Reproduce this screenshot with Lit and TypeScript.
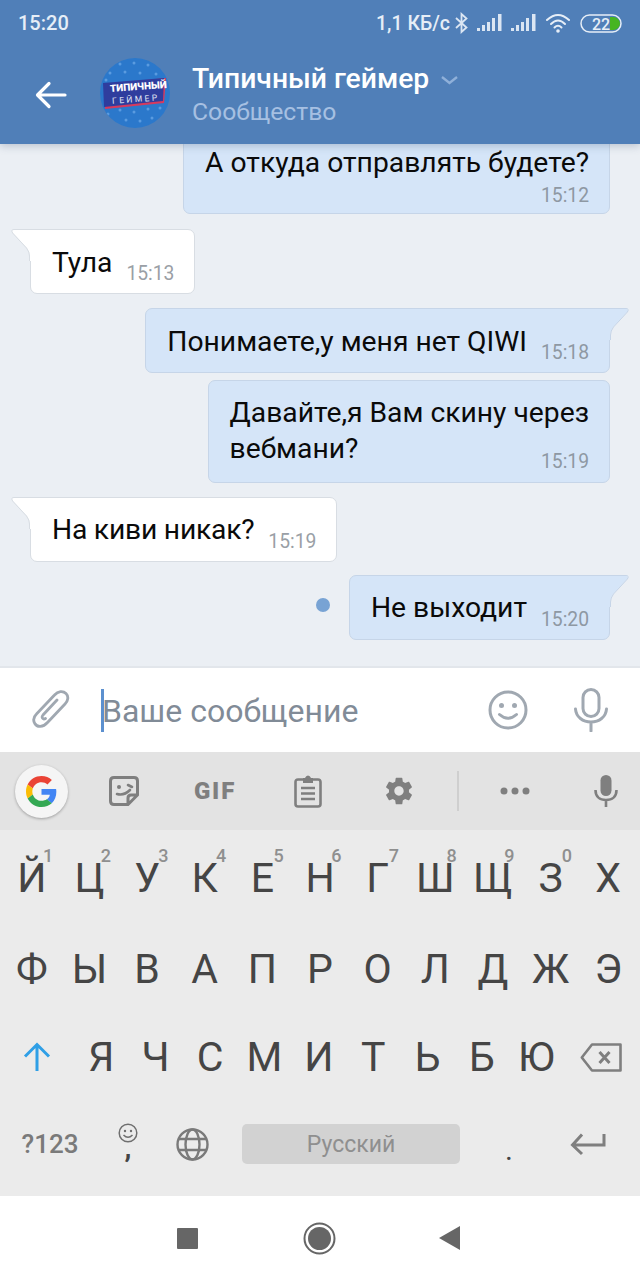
import { LitElement, html, css, svg } from "lit";
import { customElement } from "lit/decorators.js";

const tail = (side: string, fill: string, stroke: string) => html`<svg class="tail ${side}" width="21" height="32" viewBox="0 0 21 32">
  <path d="M21 1 H3 Q0 1 2 4 L16 19 Q19 23 19 27 V32 H21 Z" fill="${fill}" />
  <path d="M21 .5 H3 Q-.5 .5 1.600 4 L15.500 19 Q18.500 23 18.500 27 V32" fill="none" stroke="${stroke}" />
</svg>`;

const signal = html`<svg width="26" height="18" viewBox="0 0 26 18"><g fill="#dbe6f3"><rect x="0" y="14" width="3" height="3"/><rect x="5" y="11" width="3" height="6"/><rect x="10" y="8" width="3" height="9"/><rect x="15" y="4" width="3" height="13"/><rect x="21" y="0" width="3.500" height="17"/></g></svg>`;

const row1 = [["Й","1"],["Ц","2"],["У","3"],["К","4"],["Е","5"],["Н","6"],["Г","7"],["Ш","8"],["Щ","9"],["З","0"],["Х",""]];
const row2 = ["Ф","Ы","В","А","П","Р","О","Л","Д","Ж","Э"];
const row3 = ["Я","Ч","С","М","И","Т","Ь","Б","Ю"];

@customElement("app-root")
export class AppRoot extends LitElement {
  static styles = css`
    :host { display: block; width: 640px; height: 1280px; font-family: Roboto, "Noto Sans", sans-serif; }
    .page { width: 640px; height: 1280px; display: flex; flex-direction: column; overflow: hidden; background: #fff; }
    .header { height: 144px; flex: none; background: #507fb8; position: relative; z-index: 2; box-shadow: 0 2px 8px rgba(60,80,110,.28); display: flex; flex-direction: column; }
    .status { height: 46px; display: flex; align-items: center; padding: 0 0 0 18px; color: #e6eef7; font-weight: 500; font-size: 20px; }
    .status .time { flex: 1; }
    .status .speed { font-size: 19.500px; margin-right: 4px; }
    .status .icons { display: flex; align-items: center; margin-right: 18px; }
    .appbar { height: 98px; display: flex; align-items: flex-start; }
    .back { width: 100px; height: 98px; display: flex; align-items: center; padding-left: 35px; box-sizing: border-box; flex: none; }
    .avatar { width: 70px; height: 70px; border-radius: 50%; background-color: #2b78cb; position: relative; overflow: hidden; margin-top: 12px; flex: none; }
    .avatar svg { position: absolute; left: 0; top: 0; }
    .avatar .t1, .avatar .t2 { position: absolute; color: #fff; white-space: nowrap; transform: rotate(-4deg); }
    .avatar .t1 { left: 10px; top: 24px; font-size: 10px; font-weight: 900; line-height: 10px; }
    .avatar .t2 { left: 12px; top: 36px; font-size: 8.500px; letter-spacing: 2.400px; line-height: 10px; color: #e3e8f6; }
    .titles { margin-left: 22px; padding-top: 15px; }
    .title { font-size: 28.300px; font-weight: 500; color: #fff; line-height: 36px; display: flex; align-items: center; }
    .title svg { margin-left: 11px; margin-top: 2px; }
    .sub { font-size: 24.700px; color: #a6c0e2; line-height: 29px; margin-top: 0; }

    .messages { height: 522px; flex: none; background: #ebeff4; overflow: hidden; display: flex; flex-direction: column; align-items: flex-start; padding-left: 30px; padding-right: 30px; box-sizing: border-box; width: 640px; }
    .bubble { position: relative; box-sizing: border-box; display: flex; border: 1px solid #d8dde3; background: #fff; border-radius: 7px; color: #0a0a0a; font-size: 28.250px; line-height: 37px; padding: 14px 20px 9px 21px; flex: none; }
    .bubble.out { background: #d5e5f8; border-color: #c6d5e8; align-self: flex-end; }
    .bubble.tl { border-top-left-radius: 0; }
    .bubble.tr { border-top-right-radius: 0; }
    .bubble.stack { flex-direction: column; }
    .msg { white-space: nowrap; }
    .stamp { font-size: 19.300px; color: #9a9fa6; line-height: 22px; margin-left: 14px; align-self: flex-end; margin-bottom: -1px; white-space: nowrap; }
    .bubble.out .stamp { color: #8e98a3; }
    .stack .stamp { margin-left: 0; }
    .b1 { margin-top: -15px; height: 85px; padding-top: 14px; }
    .b1 .stamp { margin-top: 4px; }
    .b2 { margin-top: 15px; height: 65px; }
    .b3 { margin-top: 14px; height: 65px; }
    .b4 { margin-top: 7px; height: 103px; line-height: 36px; }
    .b4 .stamp { margin-top: -16px; }
    .b5 { margin-top: 14px; height: 65px; padding-top: 13px; }
    .b5 .msg { letter-spacing: -.22px; }
    .b6 { margin-top: 13px; height: 65px; padding-top: 13px; }
    .tail { position: absolute; top: -1px; }
    .tail.left { left: -20px; }
    .tail.right { right: -20px; transform: scaleX(-1); }
    .dot { position: absolute; left: -34px; top: 22px; width: 14px; height: 14px; border-radius: 50%; background: #78a3d4; }

    .inputbar { height: 86px; flex: none; box-sizing: border-box; background: #fff; border-top: 2px solid #e2e6eb; display: flex; align-items: center; position: relative; }
    .clip { width: 100px; height: 84px; display: flex; align-items: center; padding-left: 32px; box-sizing: border-box; flex: none; margin-right: 1px; }
    .caret { width: 3px; height: 43px; background: #5c90cf; margin-right: -2px; flex: none; z-index: 1; }
    .placeholder { flex: 1; font-size: 32px; color: #818b97; margin-top: 1px; }
    .smile { margin-right: 46px; display: flex; }
    .mic { margin-right: 32px; display: flex; }

    .toolbar { height: 78px; flex: none; background: #e3e3e3; display: flex; align-items: center; }
    .slot { width: 92px; height: 78px; display: flex; align-items: center; justify-content: center; flex: none; }
    .gslot { width: 78px; height: 78px; display: flex; align-items: center; justify-content: center; box-sizing: border-box; flex: none; padding-top: 1px; }
    .gcircle { width: 53px; height: 53px; border-radius: 50%; background: #f5f5f5; box-shadow: 0 1px 3px rgba(0,0,0,.3); display: flex; align-items: center; justify-content: center; margin-left: 4px; }
    .gif { font-size: 24px; font-weight: 900; color: #7f7f7f; letter-spacing: 1.800px; padding-right: 2px; box-sizing: border-box; }
    .gearslot { padding-right: 2px; box-sizing: border-box; }
    .dotsslot { width: 90px; }
    .divider { width: 2px; height: 40px; background: #cfcfcf; margin-left: 11px; margin-right: 11px; flex: none; }
    .micslot { width: 80px; height: 78px; display: flex; align-items: center; justify-content: center; padding-left: 11px; box-sizing: border-box; flex: none; }

    .keyboard { height: 366px; flex: none; background: #ebebeb; display: flex; flex-direction: column; }
    .row { display: flex; flex: none; height: 89px; align-items: center; }
    .key { flex: 1 1 0; height: 89px; display: flex; align-items: center; justify-content: center; font-size: 41px; color: #454545; position: relative; }
    .key sup { position: absolute; top: 16px; left: 40px; font-size: 18px; font-weight: 500; color: #8f8f8f; line-height: 20px; vertical-align: baseline; }
    .row.r1 { height: 95px; padding: 0 3px; }
    .row.r2 { height: 88px; padding: 0 3px; }
    .row.r3 { height: 88px; }
    .row.r4 { height: 95px; align-items: flex-start; margin-top: -1px; }
    .r1 .key { height: 95px; }
    .r2 .key { height: 88px; }
    .r3 .key.wide, .r3 .key.del { flex: 0 0 74px; }
    .r3 .key { flex: 0 0 54.400px; height: 88px; }
    .r4 .fn { height: 88px; display: flex; align-items: center; justify-content: center; flex: none; }
    .n123 { width: 100px; font-size: 26px; font-weight: 500; color: #7a7a7a; }
    .comma { width: 56px; flex-direction: column; color: #454545; font-size: 28px; font-weight: 700; line-height: 20px; padding-bottom: 8px; box-sizing: border-box; }
    .comma span { display: block; margin-top: -5px; }
    .globe { width: 72px; }
    .space { width: 218px; height: 40px; border-radius: 5px; background: #d2d2d2; flex: none; margin-top: 24px; margin-left: 14px; display: flex; align-items: center; justify-content: center; font-size: 23px; color: #8f8f8f; }
    .period { width: 98px; font-size: 30px; color: #454545; }
    .period span { display: block; margin-top: 10px; }
    .enter { width: 59px; }

    .nav { flex: 1; background: #fff; display: flex; align-items: center; }
    .nav .a { width: 198px; display: flex; justify-content: flex-end; margin-right: 105px; }
    .nav .b { width: 33px; display: flex; margin-right: 103px; }
  `;

  render() {
    return html`<div class="page">
      <header class="header">
        <div class="status">
          <span class="time">15:20</span>
          <span class="speed">1,1 КБ/с</span>
          <span class="icons">
            <svg width="15" height="22" viewBox="0 0 15 22" style="margin-right:8px"><path d="M2 6 L12.500 15.500 L7.500 20 V2 L12.500 6.500 L2 16" fill="none" stroke="#dbe6f3" stroke-width="1.800"/></svg>
            ${signal}
            <span style="width:8px"></span>
            ${signal}
            <svg width="26" height="20" viewBox="0 0 26 20" style="margin-left:8px;margin-right:9px"><g fill="none" stroke="#e6eef7" stroke-width="2" stroke-linecap="round"><path d="M2 7 Q13 -3 24 7"/><path d="M6 11 Q13 4 20 11"/><path d="M9.500 14.500 Q13 11 16.500 14.500"/></g><circle cx="13" cy="18" r="1.800" fill="#e6eef7"/></svg>
            <svg width="42" height="19" viewBox="0 0 42 19"><rect x="1" y="1" width="40" height="17" rx="8.500" fill="none" stroke="#e6eef7" stroke-width="1.500"/><path d="M30 3 h3.500 a6.500 6.500 0 0 1 0 13 H30 Z" fill="#46b521"/><text x="12" y="15.500" font-size="16" font-weight="500" fill="#e6eef7" font-family="Roboto">22</text></svg>
          </span>
        </div>
        <div class="appbar">
          <div class="back"><svg width="32" height="28" viewBox="0 0 32 28"><path d="M30 14 H3 M14 2.500 L2.500 14 L14 25.500" fill="none" stroke="#fff" stroke-width="3.200" stroke-linecap="round" stroke-linejoin="round"/></svg></div>
          <div class="avatar">
            <svg width="70" height="70" viewBox="0 0 70 70">
              ${[[20,6],[34,5],[48,7],[10,15],[25,14],[40,15],[56,16],[6,22],[62,24],[8,56],[20,52],[34,54],[48,51],[60,50],[26,62],[40,63],[52,60]].map(([x,y]) => svg`<circle cx="${x}" cy="${y}" r="1.500" fill="#5a9be0"/>`)}
              <path d="M5 26 L66 20 L64 45 L5 51 Z" fill="#d63a5e"/>
              <path d="M3 25 L64 20 L63 43 L4 49 Z" fill="#2f3d9e"/>
            </svg>
            <span class="t1">ТИПИЧНЫЙ</span>
            <span class="t2">ГЕЙМЕР</span>
          </div>
          <div class="titles">
            <div class="title">Типичный геймер<svg width="19" height="10" viewBox="0 0 19 10"><path d="M2 2 L9.500 8 L17 2" fill="none" stroke="#8fb0d9" stroke-width="2.400"/></svg></div>
            <div class="sub">Сообщество</div>
          </div>
        </div>
      </header>

      <section class="messages">
        <div class="bubble out stack b1"><span class="msg">А откуда отправлять будете?</span><span class="stamp">15:12</span></div>
        <div class="bubble tl b2">${tail("left", "#fff", "#d8dde3")}<span class="msg">Тула</span><span class="stamp">15:13</span></div>
        <div class="bubble out tr b3">${tail("right", "#d5e5f8", "#c6d5e8")}<span class="msg">Понимаете,у меня нет QIWI</span><span class="stamp">15:18</span></div>
        <div class="bubble out stack b4"><span class="msg">Давайте,я Вам скину через<br />вебмани?</span><span class="stamp">15:19</span></div>
        <div class="bubble tl b5">${tail("left", "#fff", "#d8dde3")}<span class="msg">На киви никак?</span><span class="stamp">15:19</span></div>
        <div class="bubble out tr b6">${tail("right", "#d5e5f8", "#c6d5e8")}<span class="dot"></span><span class="msg">Не выходит</span><span class="stamp">15:20</span></div>
      </section>

      <section class="inputbar">
        <div class="clip"><svg width="38" height="42" viewBox="0 0 38 42"><path d="M33 15 L15.500 33.500 C11 38.500 5 38.500 2.800 34.500 C1 31.500 1.500 28 4.500 25 L22.500 6 C26 2 31 1.500 34 4.500 C37 7.500 36 12 33 15 M25 11 L11 26 C9 28.500 11 31 13.500 29.500" fill="none" stroke="#a0a8b1" stroke-width="2.800" stroke-linecap="round"/></svg></div>
        <div class="caret"></div>
        <div class="placeholder">Ваше сообщение</div>
        <div class="smile"><svg width="40" height="40" viewBox="0 0 40 40"><circle cx="20" cy="20" r="18" fill="none" stroke="#a0a8b1" stroke-width="3"/><circle cx="13.500" cy="15.500" r="2.500" fill="#a0a8b1"/><circle cx="26.500" cy="15.500" r="2.500" fill="#a0a8b1"/><path d="M11.500 24.500 Q20 32 28.500 24.500" fill="none" stroke="#a0a8b1" stroke-width="3" stroke-linecap="round"/></svg></div>
        <div class="mic"><svg width="34" height="44" viewBox="0 0 34 44"><rect x="9" y="1.500" width="16" height="27" rx="8" fill="none" stroke="#a0a8b1" stroke-width="3"/><path d="M1.500 21 C2 29 9 34 17 34 C25 34 32 29 32.500 21 M17 34 V43" fill="none" stroke="#a0a8b1" stroke-width="3" stroke-linecap="round"/></svg></div>
      </section>

      <section class="toolbar">
        <div class="gslot"><div class="gcircle"><svg width="31" height="31" viewBox="0 0 48 48">
          <path fill="#EA4335" d="M24 9.500c3.540 0 6.710 1.220 9.210 3.600l6.850-6.850C35.900 2.380 30.470 0 24 0 14.620 0 6.510 5.380 2.560 13.220l7.980 6.190C12.430 13.720 17.740 9.500 24 9.500z"/>
          <path fill="#4285F4" d="M46.980 24.550c0-1.570-.15-3.090-.38-4.550H24v9.020h12.940c-.58 2.960-2.260 5.480-4.780 7.180l7.730 6c4.510-4.180 7.090-10.360 7.090-17.650z"/>
          <path fill="#FBBC05" d="M10.530 28.590c-.48-1.450-.76-2.990-.76-4.590s.27-3.140.76-4.590l-7.980-6.190C.92 16.460 0 20.120 0 24c0 3.880.92 7.540 2.560 10.780l7.970-6.190z"/>
          <path fill="#34A853" d="M24 48c6.480 0 11.930-2.130 15.890-5.810l-7.730-6c-2.150 1.450-4.920 2.300-8.160 2.300-6.260 0-11.570-4.220-13.470-9.910l-7.980 6.190C6.510 42.620 14.620 48 24 48z"/>
        </svg></div></div>
        <div class="slot"><svg width="30" height="30" viewBox="0 0 30 30"><path d="M5 1.500 H25 Q28.500 1.500 28.500 5 V19 L19 28.500 H5 Q1.500 28.500 1.500 25 V5 Q1.500 1.500 5 1.500 Z M28 19 H22 Q19 19 19 22 V28" fill="none" stroke="#7f7f7f" stroke-width="3"/><circle cx="10" cy="11" r="2" fill="#7f7f7f"/><path d="M19 9 l4 2 M8 18 Q15 20 21 14" fill="none" stroke="#7f7f7f" stroke-width="2.600" stroke-linecap="round"/></svg></div>
        <div class="slot gif">GIF</div>
        <div class="slot"><svg width="28" height="33" viewBox="0 0 28 33"><path d="M9 4.500 H4 Q1.500 4.500 1.500 7 V29 Q1.500 31.500 4 31.500 H24 Q26.500 31.500 26.500 29 V7 Q26.500 4.500 24 4.500 H19" fill="none" stroke="#7f7f7f" stroke-width="2.600"/><path d="M9 3 H11 Q12 .5 14 .5 Q16 .5 17 3 H19 V8 H9 Z" fill="#7f7f7f"/><path d="M7 13 H21 M7 18.500 H21 M7 24 H21" stroke="#7f7f7f" stroke-width="2.600"/></svg></div>
        <div class="slot gearslot"><svg width="32" height="32" viewBox="0 0 24 24"><path fill="#7f7f7f" d="M19.430 12.980c.04-.32.07-.64.07-.98s-.03-.66-.07-.98l2.110-1.650c.19-.15.24-.42.12-.64l-2-3.460c-.12-.22-.39-.3-.61-.22l-2.490 1c-.52-.4-1.080-.73-1.690-.98l-.38-2.650C14.460 2.180 14.250 2 14 2h-4c-.25 0-.46.18-.49.420l-.38 2.650c-.61.25-1.170.59-1.690.98l-2.490-1c-.23-.09-.49 0-.61.220l-2 3.460c-.13.22-.07.49.12.64l2.110 1.650c-.04.32-.07.65-.07.98s.03.66.07.98l-2.110 1.650c-.19.15-.24.42-.12.64l2 3.460c.12.22.39.3.61.22l2.490-1c.52.4 1.080.73 1.690.98l.38 2.650c.03.24.24.42.49.42h4c.25 0 .46-.18.49-.42l.38-2.650c.61-.25 1.170-.59 1.690-.98l2.490 1c.23.09.49 0 .61-.22l2-3.460c.12-.22.07-.49-.12-.64l-2.110-1.650zM12 15.500c-1.930 0-3.500-1.570-3.500-3.500s1.570-3.500 3.500-3.500 3.500 1.570 3.500 3.500-1.570 3.500-3.500 3.500z"/></svg></div>
        <div class="divider"></div>
        <div class="slot dotsslot"><svg width="30" height="8" viewBox="0 0 30 8"><g fill="#7f7f7f"><circle cx="4" cy="4" r="3.500"/><circle cx="15" cy="4" r="3.500"/><circle cx="26" cy="4" r="3.500"/></g></svg></div>
        <div class="micslot"><svg width="24" height="32" viewBox="0 0 24 32"><rect x="6.500" y="0" width="11" height="21" rx="5.500" fill="#7f7f7f"/><path d="M1.500 15 C1.500 22 6 25 12 25 C18 25 22.500 22 22.500 15 M12 25 V32" fill="none" stroke="#7f7f7f" stroke-width="2.600"/></svg></div>
      </section>

      <section class="keyboard">
        <div class="row r1">${row1.map(([k, n]) => html`<div class="key">${k}${n ? html`<sup>${n}</sup>` : ""}</div>`)}</div>
        <div class="row r2">${row2.map((k) => html`<div class="key">${k}</div>`)}</div>
        <div class="row r3">
          <div class="key wide"><svg width="28" height="30" viewBox="0 0 28 30"><path d="M14 29 V3 M2 14.500 L14 2.500 L26 14.500" fill="none" stroke="#2f9fe6" stroke-width="3"/></svg></div>
          ${row3.map((k) => html`<div class="key">${k}</div>`)}
          <div class="key del"><svg width="42" height="29" viewBox="0 0 42 29"><path d="M12 1.500 H40.500 V27.500 H12 L1.800 14.500 Z" fill="none" stroke="#7f7f7f" stroke-width="2.600" stroke-linejoin="round"/><path d="M19.500 9 L29.500 20 M29.500 9 L19.500 20" stroke="#7f7f7f" stroke-width="3"/></svg></div>
        </div>
        <div class="row r4">
          <div class="fn n123">?123</div>
          <div class="fn comma"><svg width="20" height="20" viewBox="0 0 20 20"><circle cx="10" cy="10" r="8.800" fill="none" stroke="#6f6f6f" stroke-width="1.500"/><circle cx="7" cy="8" r="1.200" fill="#6f6f6f"/><circle cx="13" cy="8" r="1.200" fill="#6f6f6f"/><path d="M5.500 12 Q10 16.500 14.500 12" fill="none" stroke="#6f6f6f" stroke-width="1.500"/></svg><span>,</span></div>
          <div class="fn globe"><svg width="33" height="33" viewBox="0 0 33 33"><g fill="none" stroke="#7a7a7a" stroke-width="2.400"><circle cx="16.500" cy="16.500" r="15"/><ellipse cx="16.500" cy="16.500" rx="7" ry="15"/><path d="M3 11 H30 M3 22 H30"/></g></svg></div>
          <div class="space">Русский</div>
          <div class="fn period"><span>.</span></div>
          <div class="fn enter"><svg width="36" height="24" viewBox="0 0 36 24"><path d="M34 2 V13 H3 M12 2.500 L2.500 13 L12 22" fill="none" stroke="#7f7f7f" stroke-width="3"/></svg></div>
        </div>
      </section>

      <nav class="nav">
        <div class="a"><svg width="21" height="21"><rect width="21" height="21" rx="1" fill="#666"/></svg></div>
        <div class="b"><svg width="33" height="33" viewBox="0 0 33 33"><circle cx="16.500" cy="16.500" r="15" fill="none" stroke="#666" stroke-width="2"/><circle cx="16.500" cy="16.500" r="11.500" fill="#666"/></svg></div>
        <svg width="21" height="24" viewBox="0 0 21 24"><path d="M21 0 V24 L0 12 Z" fill="#666"/></svg>
      </nav>
    </div>`;
  }
}
